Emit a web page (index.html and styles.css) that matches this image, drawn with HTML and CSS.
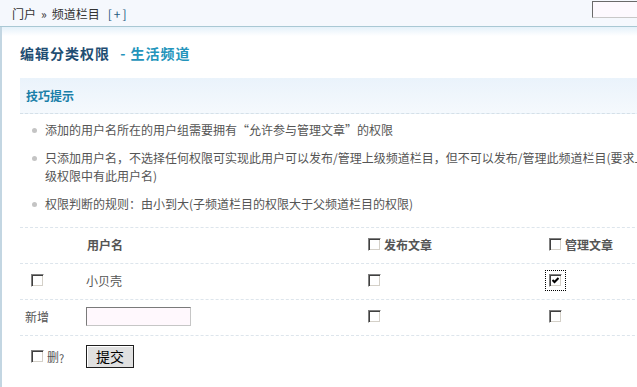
FILE: index.html
```html
<!DOCTYPE html>
<html lang="zh-CN">
<head>
    <meta charset="UTF-8">
    <title>编辑分类权限</title>
    <link rel="stylesheet" href="styles.css">
</head>
<body>
<div class="page">
    <div class="topbar">
        <span class="crumb">门户<span class="sep">&raquo;</span>频道栏目</span>
        <a class="add" href="#">[+]</a>
        <input class="search" type="text">
    </div>

    <div class="main">
        <h1 class="title">编辑分类权限 <span class="sub">- 生活频道</span></h1>

        <div class="tips">
            <div class="tips-head">技巧提示</div>
            <ul class="tips-list">
                <li>添加的用户名所在的用户组需要拥有“允许参与管理文章”的权限</li>
                <li>只添加用户名，不选择任何权限可实现此用户可以发布/管理上级频道栏目，但不可以发布/管理此频道栏目(要求上级权限中有此用户名)</li>
                <li>权限判断的规则：由小到大(子频道栏目的权限大于父频道栏目的权限)</li>
            </ul>
        </div>

        <form class="perm">
            <div class="row head">
                <div class="c1"></div>
                <div class="c2">用户名</div>
                <div class="c3"><label><input type="checkbox" class="chk">发布文章</label></div>
                <div class="c4"><label><input type="checkbox" class="chk">管理文章</label></div>
            </div>
            <div class="row">
                <div class="c1"><input type="checkbox" class="chk first"></div>
                <div class="c2">小贝壳</div>
                <div class="c3"><input type="checkbox" class="chk"></div>
                <div class="c4"><input type="checkbox" class="chk focus" checked></div>
            </div>
            <div class="row">
                <div class="c1 pad">新增</div>
                <div class="c2"><input type="text" class="txt"></div>
                <div class="c3"><input type="checkbox" class="chk"></div>
                <div class="c4"><input type="checkbox" class="chk"></div>
            </div>
            <div class="row last">
                <div class="c1"><label class="del"><input type="checkbox" class="chk first">删<small>?</small></label></div>
                <div class="c2"><button type="button" class="btn">提交</button></div>
                <div class="c3"></div>
                <div class="c4"></div>
            </div>
        </form>
    </div>
</div>
</body>
</html>
```

FILE: styles.css
```css
body {
    margin: 0;
    overflow: hidden;
    background: #fff;
    font-family: "Noto Sans CJK SC", "Noto Sans", sans-serif;
    font-size: 12px;
    color: #555;
}

.page {
    width: 660px;
}

/* 顶部导航 */
.topbar {
    display: flex;
    align-items: center;
    height: 26px;
    padding-left: 12px;
    background: #f5f8fd;
    border-bottom: 1px solid #a9c8d4;
    color: #333;
}

.crumb .sep {
    margin: 0 5px;
}

.add {
    margin-left: 8px;
    color: #245a80;
    text-decoration: none;
    letter-spacing: 2px;
}

.search {
    margin: 1px 8px 0 auto;
    align-self: flex-start;
    width: 60px;
    height: 17px;
    padding: 0;
    box-sizing: border-box;
    border: 1px solid;
    border-color: #6a6a6a #c8c8c8 #c8c8c8 #6a6a6a;
    background: #fdf9fe;
}

.main {
    border-left: 2px solid #c3d6e2;
    background: linear-gradient(to bottom, #e5f1fa 0, #ffffff 9px);
    padding: 16px 0 30px 18px;
}

.title {
    margin: 0 0 15px;
    font-size: 14px;
    line-height: 20px;
    font-weight: bold;
    letter-spacing: 1px;
    color: #1f4d72;
}

.title .sub {
    margin-left: 6px;
    color: #2494bb;
}

/* 技巧提示 */
.tips-head {
    height: 35px;
    line-height: 35px;
    padding-left: 6px;
    font-weight: bold;
    color: #1a7fa9;
    background: linear-gradient(to bottom, #eaf3fb, #f5f9fd);
    border-bottom: 1px dashed #d5e0e8;
}

.tips-list {
    list-style: none;
    margin: 0;
    padding: 7px 5px 14px 25px;
}

.tips-list li {
    position: relative;
    line-height: 18px;
    margin-bottom: 10px;
}

.tips-list li:last-child {
    margin-bottom: 0;
}

.tips-list li::before {
    content: '';
    position: absolute;
    left: -13px;
    top: 7px;
    width: 5px;
    height: 5px;
    border-radius: 50%;
    background: #c4c4c4;
}

/* 权限表 */
.row {
    display: grid;
    grid-template-columns: 66px 282px 181px 1fr;
    align-items: center;
    height: 35px;
    border-top: 1px dashed #dde5ec;
}

.row > div {
    display: flex;
    align-items: center;
    margin-top: -3px;
}

.row.last {
    height: 38px;
}

.row.last > div {
    margin-top: 2px;
}

.row.head {
    font-weight: bold;
}

.row.head .c2 {
    padding-left: 1px;
}

.c1.pad {
    padding-left: 5px;
}

.row label {
    display: flex;
    align-items: center;
}

.chk {
    -webkit-appearance: none;
    appearance: none;
    width: 13px;
    height: 13px;
    margin: 0 3px 0 0;
    box-sizing: border-box;
    border: 1px solid;
    border-color: #808080 #fff #fff #808080;
    box-shadow: inset 1px 1px 0 #404040, inset -1px -1px 0 #d4d0c8;
    background: #fff;
}

.chk.first {
    margin-left: 11px;
}

.chk:checked {
    background: #fff url("data:image/svg+xml,%3Csvg xmlns='http://www.w3.org/2000/svg' width='7' height='7'%3E%3Cpolyline points='0.5,3 2.5,5 6.5,1' fill='none' stroke='black' stroke-width='2'/%3E%3C/svg%3E") no-repeat 2px 2px;
}

.chk.focus {
    outline: 1px dotted #000;
    outline-offset: 3px;
}

.del {
    color: #555;
}

.del small {
    font-size: 11px;
    margin-top: 3px;
}

.txt {
    width: 105px;
    height: 19px;
    margin: 0;
    padding: 0 2px;
    box-sizing: border-box;
    border: 1px solid;
    border-color: #7a7a7a #c6c6c6 #c6c6c6 #7a7a7a;
    background: #fff8fd;
}

.btn {
    width: 48px;
    height: 23px;
    padding: 0;
    font-family: inherit;
    font-size: 14px;
    color: #000;
    background: #e0e0e0;
    border: 1px solid #1e1e1e;
    box-shadow: inset 1px 1px 0 #fff;
}
```
